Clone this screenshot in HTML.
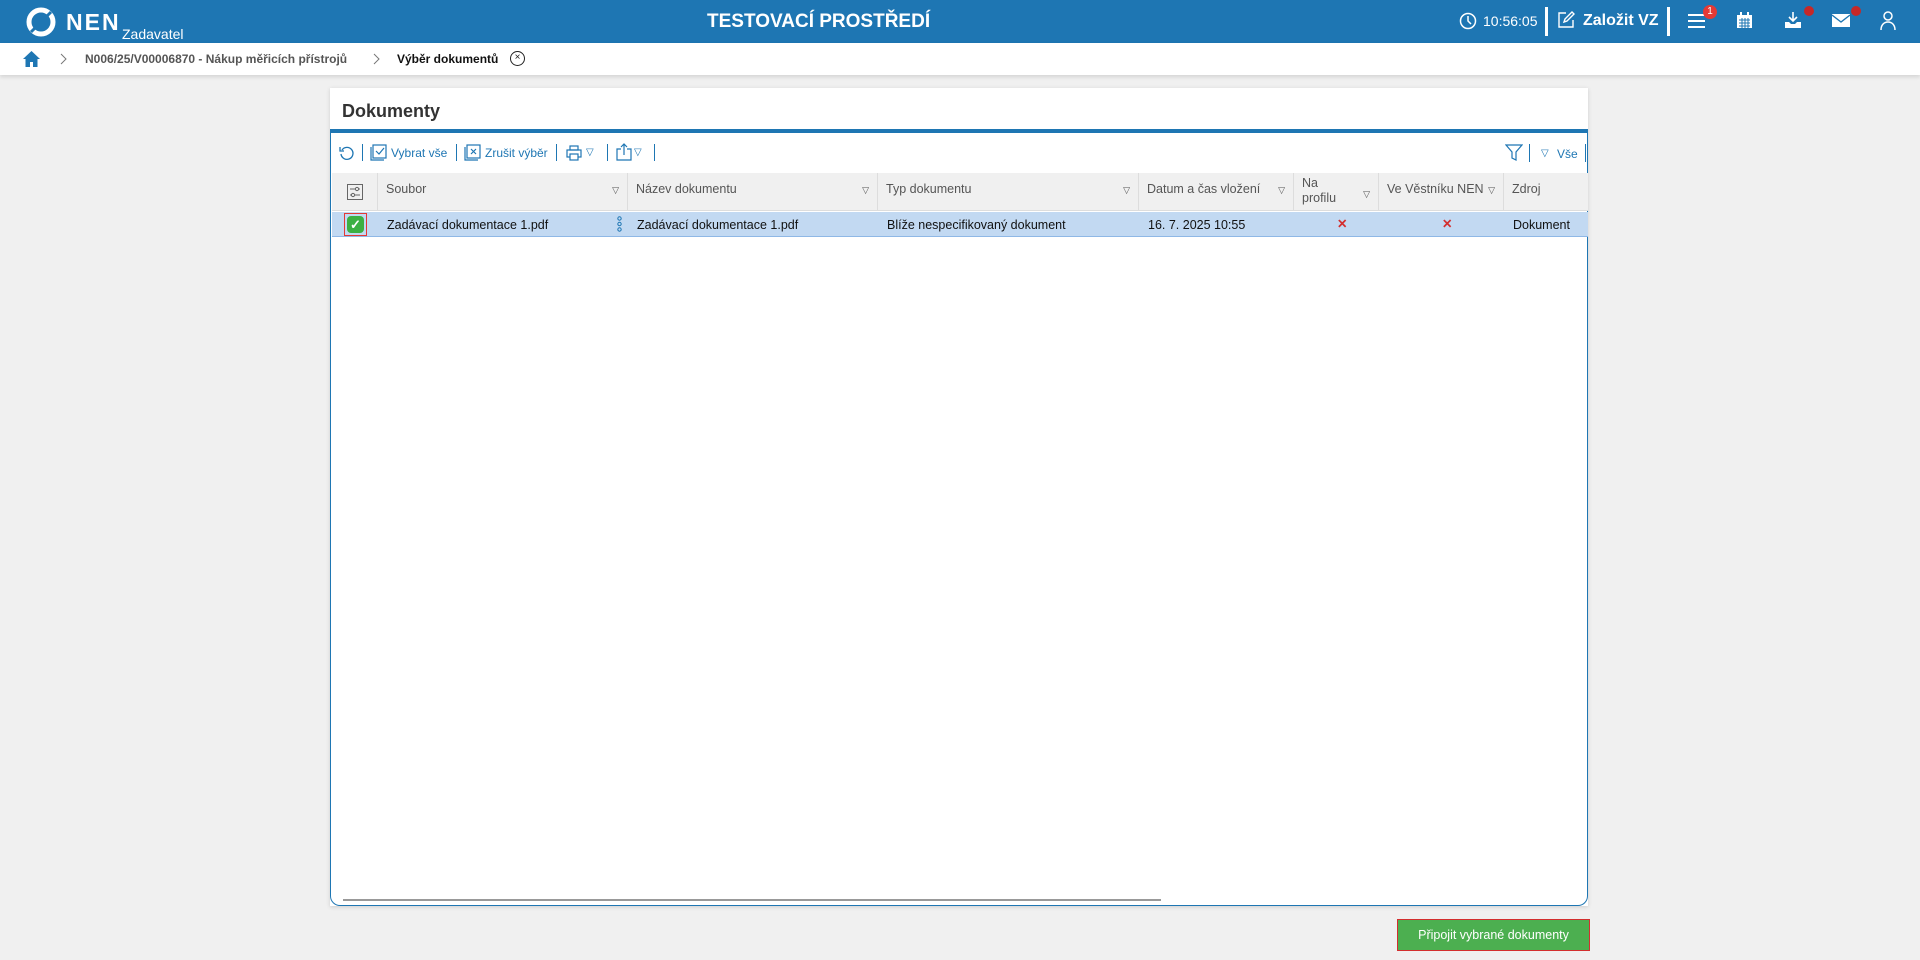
<!DOCTYPE html>
<html><head><meta charset="utf-8"><style>
*{box-sizing:border-box;margin:0;padding:0}
body{width:1920px;height:960px;background:#f0f0f0;font-family:"Liberation Sans",sans-serif;position:relative;overflow:hidden;color:#222}
.top{position:absolute;left:0;top:0;width:1920px;height:43px;background:#1e76b3;color:#fff}
.abs{position:absolute}
.crumb{position:absolute;left:0;top:43px;width:1920px;height:32px;background:#fff;box-shadow:0 2px 4px rgba(0,0,0,.12);font-size:12px;font-weight:bold;color:#555}
.panel{position:absolute;left:330px;top:88px;width:1258px;height:818px;background:#fff;box-shadow:0 1px 4px rgba(0,0,0,.15)}
.grid{position:absolute;left:330px;top:132px;width:1258px;height:774px;border:1px solid #1e76b3;border-top:none;border-radius:0 0 10px 10px}
.tb{font-size:12px;color:#1e76b3}
.th{position:absolute;top:173px;height:38px;background:#f0f0f0;border-right:1px solid #ddd;border-bottom:1px solid #ddd;font-size:12.5px;color:#555;padding:9px 8px}
.td{position:absolute;top:212px;height:24px;font-size:12.5px;color:#111;padding:6px 8px}
.tri{position:absolute;right:8px;top:12px;font-size:9px;color:#555}
.sep{position:absolute;width:1px;background:#1e76b3}
</style></head><body>
<div class="top">
 <svg class="abs" style="left:25px;top:6px" width="32" height="32" viewBox="0 0 32 32"><circle cx="16" cy="16" r="12" fill="none" stroke="#fff" stroke-width="5"/><path d="M6 26 L26 6" stroke="#1e76b3" stroke-width="3"/></svg>
 <div class="abs" style="left:66px;top:9px;font-size:23px;font-weight:bold;letter-spacing:2px">NEN</div>
 <div class="abs" style="left:122px;top:26px;font-size:14px">Zadavatel</div>
 <div class="abs" style="left:707px;top:11px;font-size:19px;font-weight:bold">TESTOVACÍ PROSTŘEDÍ</div>
 <svg class="abs" style="left:1459px;top:12px" width="18" height="18" viewBox="0 0 18 18"><circle cx="9" cy="9" r="7.5" fill="none" stroke="#fff" stroke-width="1.5"/><path d="M9 4v5l3 3" fill="none" stroke="#fff" stroke-width="1.5"/></svg>
 <div class="abs" style="left:1483px;top:13px;font-size:14px">10:56:05</div>
 <div class="abs" style="left:1545px;top:7px;width:3px;height:29px;background:#fff"></div>
 <svg class="abs" style="left:1557px;top:11px" width="18" height="18" viewBox="0 0 18 18"><path d="M9 2H2v14h14V9" fill="none" stroke="#fff" stroke-width="1.4"/><path d="M7 11l1-3 7-7 2 2-7 7z" fill="none" stroke="#fff" stroke-width="1.4"/></svg>
 <div class="abs" style="left:1583px;top:12px;font-size:16px;font-weight:bold">Založit VZ</div>
 <div class="abs" style="left:1667px;top:7px;width:3px;height:29px;background:#fff"></div>
 <svg class="abs" style="left:1688px;top:13px" width="17" height="15"><rect y="1" width="17" height="2" fill="#fff"/><rect y="7" width="17" height="2" fill="#fff"/><rect y="13" width="17" height="2" fill="#fff"/></svg>
 <div class="abs" style="left:1703px;top:5px;width:14px;height:14px;border-radius:7px;background:#e53935;font-size:10px;text-align:center;line-height:14px">1</div>
 <svg class="abs" style="left:1736px;top:12px" width="17" height="17" viewBox="0 0 17 17"><rect x="1" y="3" width="15" height="13" fill="#fff"/><rect x="4" y="0" width="2" height="4" fill="#fff"/><rect x="11" y="0" width="2" height="4" fill="#fff"/><path d="M3 8h11M3 11h11M3 14h11M6 6v10M9 6v10M12 6v10" stroke="#1e76b3" stroke-width="1"/></svg>
 <svg class="abs" style="left:1784px;top:12px" width="18" height="17" viewBox="0 0 18 17"><path d="M9 0v9M5 5l4 4 4-4" fill="none" stroke="#fff" stroke-width="1.6"/><path d="M1 10v6h16v-6h-4l-2 2H7l-2-2z" fill="#fff"/></svg>
 <div class="abs" style="left:1804px;top:6px;width:10px;height:10px;border-radius:5px;background:#c62828"></div>
 <svg class="abs" style="left:1832px;top:14px" width="18" height="13" viewBox="0 0 18 13"><rect width="18" height="13" fill="#fff"/><path d="M0 1l9 7 9-7" fill="none" stroke="#1e76b3" stroke-width="1.3"/></svg>
 <div class="abs" style="left:1851px;top:6px;width:10px;height:10px;border-radius:5px;background:#c62828"></div>
 <svg class="abs" style="left:1880px;top:11px" width="16" height="19" viewBox="0 0 16 19"><circle cx="8" cy="5" r="4" fill="none" stroke="#fff" stroke-width="1.5"/><path d="M1 19c0-5 3-8 7-8s7 3 7 8" fill="none" stroke="#fff" stroke-width="1.5"/></svg>
</div>
<div class="crumb">
 <svg class="abs" style="left:23px;top:8px" width="17" height="16" viewBox="0 0 17 16"><path d="M8.5 0L0 8h2.5v8h4.5v-5h3v5h4.5V8H17z" fill="#1e76b3"/></svg>
 <svg class="abs" style="left:60px;top:10px" width="7" height="12"><path d="M1 1l5 5-5 5" fill="none" stroke="#777" stroke-width="1"/></svg>
 <div class="abs" style="left:85px;top:9px">N006/25/V00006870 - Nákup měřicích přístrojů</div>
 <svg class="abs" style="left:373px;top:10px" width="7" height="12"><path d="M1 1l5 5-5 5" fill="none" stroke="#777" stroke-width="1"/></svg>
 <div class="abs" style="left:397px;top:9px;color:#111">Výběr dokumentů</div>
 <div class="abs" style="left:510px;top:8px;width:15px;height:15px;border:1.3px solid #222;border-radius:50%;font-size:10px;text-align:center;line-height:12px;color:#222;font-weight:normal">×</div>
</div>
<div class="panel"></div>
<div class="abs" style="left:342px;top:101px;font-size:18px;font-weight:bold;color:#333">Dokumenty</div>
<div class="abs" style="left:330px;top:129px;width:1258px;height:4px;background:#1e76b3"></div>
<div class="grid"></div>
<div class="tb">
 <svg class="abs" style="left:339px;top:145px" width="16" height="16" viewBox="0 0 16 16"><path d="M3 5A6 6 0 1 1 2 9" fill="none" stroke="#1e76b3" stroke-width="1.3"/><path d="M1 2v4h4" fill="none" stroke="#1e76b3" stroke-width="1.3"/></svg>
 <div class="sep" style="left:362px;top:144px;height:17px"></div>
 <svg class="abs" style="left:370px;top:144px" width="17" height="17" viewBox="0 0 17 17"><rect x="3" y="1" width="13" height="13" fill="none" stroke="#1e76b3" stroke-width="1.2"/><path d="M1 3v13h13" fill="none" stroke="#1e76b3" stroke-width="1.2"/><path d="M6 7l3 3 5-6" fill="none" stroke="#1e76b3" stroke-width="1.2"/></svg>
 <div class="abs" style="left:391px;top:146px">Vybrat vše</div>
 <div class="sep" style="left:456px;top:144px;height:17px"></div>
 <svg class="abs" style="left:464px;top:144px" width="17" height="17" viewBox="0 0 17 17"><rect x="3" y="1" width="13" height="13" fill="none" stroke="#1e76b3" stroke-width="1.2"/><path d="M1 3v13h13" fill="none" stroke="#1e76b3" stroke-width="1.2"/><path d="M7 5l5 5M12 5l-5 5" stroke="#1e76b3" stroke-width="1.2"/></svg>
 <div class="abs" style="left:485px;top:146px">Zrušit výběr</div>
 <div class="sep" style="left:556px;top:144px;height:17px"></div>
 <svg class="abs" style="left:566px;top:145px" width="16" height="16" viewBox="0 0 16 16"><rect x="1" y="5" width="14" height="7" fill="none" stroke="#1e76b3" stroke-width="1.2"/><rect x="4" y="1" width="8" height="4" fill="none" stroke="#1e76b3" stroke-width="1.2"/><rect x="4" y="9" width="8" height="6" fill="#fff" stroke="#1e76b3" stroke-width="1.2"/></svg>
 <div class="abs" style="left:586px;top:147px;font-size:10px">▽</div>
 <div class="sep" style="left:607px;top:144px;height:17px"></div>
 <svg class="abs" style="left:616px;top:143px" width="16" height="18" viewBox="0 0 16 18"><path d="M5 6H1v11h14V6h-4" fill="none" stroke="#1e76b3" stroke-width="1.2"/><path d="M8 12V1M5 4l3-3 3 3" fill="none" stroke="#1e76b3" stroke-width="1.2"/></svg>
 <div class="abs" style="left:634px;top:147px;font-size:10px">▽</div>
 <div class="sep" style="left:654px;top:144px;height:17px"></div>
 <svg class="abs" style="left:1505px;top:144px" width="18" height="17" viewBox="0 0 18 17"><path d="M1 1h16l-6 7v8l-4-2V8z" fill="none" stroke="#1e76b3" stroke-width="1.2"/></svg>
 <div class="sep" style="left:1529px;top:144px;height:18px"></div>
 <div class="abs" style="left:1541px;top:148px;font-size:10px">▽</div>
 <div class="abs" style="left:1557px;top:147px">Vše</div>
 <div class="sep" style="left:1585px;top:144px;height:18px"></div>
</div>
<div class="th" style="left:332px;width:46px"><svg style="position:absolute;left:15px;top:11px" width="16" height="16" viewBox="0 0 16 16"><rect x=".5" y=".5" width="15" height="15" fill="none" stroke="#666"/><path d="M3 5h10M3 11h10" stroke="#666"/><circle cx="10" cy="5" r="1.6" fill="#f0f0f0" stroke="#666"/><circle cx="6" cy="11" r="1.6" fill="#f0f0f0" stroke="#666"/></svg></div>
<div class="th" style="left:378px;width:250px">Soubor<span class="tri">▽</span></div>
<div class="th" style="left:628px;width:250px">Název dokumentu<span class="tri">▽</span></div>
<div class="th" style="left:878px;width:261px">Typ dokumentu<span class="tri">▽</span></div>
<div class="th" style="left:1139px;width:155px">Datum a čas vložení<span class="tri">▽</span></div>
<div class="th" style="left:1294px;width:85px;padding-top:3px;line-height:15px">Na<br>profilu<span class="tri" style="top:14px">▽</span></div>
<div class="th" style="left:1379px;width:125px">Ve Věstníku NEN<span class="tri">▽</span></div>
<div class="th" style="left:1504px;width:84px;border-right:none">Zdroj</div>
<div class="abs" style="left:332px;top:212px;width:1256px;height:25px;background:#c2d9f2;border-bottom:1px solid #8fb8e6"></div>
<div class="abs" style="left:344px;top:213px;width:23px;height:23px;border:1px solid #e53935"></div>
<div class="abs" style="left:347px;top:216px;width:17px;height:17px;border-radius:4px;background:#3cb043;color:#fff;font-size:13px;font-weight:bold;text-align:center;line-height:17px">✓</div>
<div class="td" style="left:379px">Zadávací dokumentace 1.pdf</div>
<svg class="abs" style="left:617px;top:216px" width="5" height="16"><circle cx="2.5" cy="2.5" r="1.7" fill="none" stroke="#1e76b3"/><circle cx="2.5" cy="8" r="1.7" fill="none" stroke="#1e76b3"/><circle cx="2.5" cy="13.5" r="1.7" fill="none" stroke="#1e76b3"/></svg>
<div class="td" style="left:629px">Zadávací dokumentace 1.pdf</div>
<div class="td" style="left:879px">Blíže nespecifikovaný dokument</div>
<div class="td" style="left:1140px">16. 7. 2025 10:55</div>
<div class="td" style="left:1329px;color:#d32f2f;font-weight:bold;top:210px">✕</div>
<div class="td" style="left:1434px;color:#d32f2f;font-weight:bold;top:210px">✕</div>
<div class="td" style="left:1505px">Dokument</div>
<div class="abs" style="left:343px;top:899px;width:818px;height:2px;background:#999"></div>
<div class="abs" style="left:1397px;top:919px;width:193px;height:32px;background:#4caf50;border:1px solid #d32f2f;color:#fff;font-size:12.5px;text-align:center;line-height:30px">Připojit vybrané dokumenty</div>
</body></html>
